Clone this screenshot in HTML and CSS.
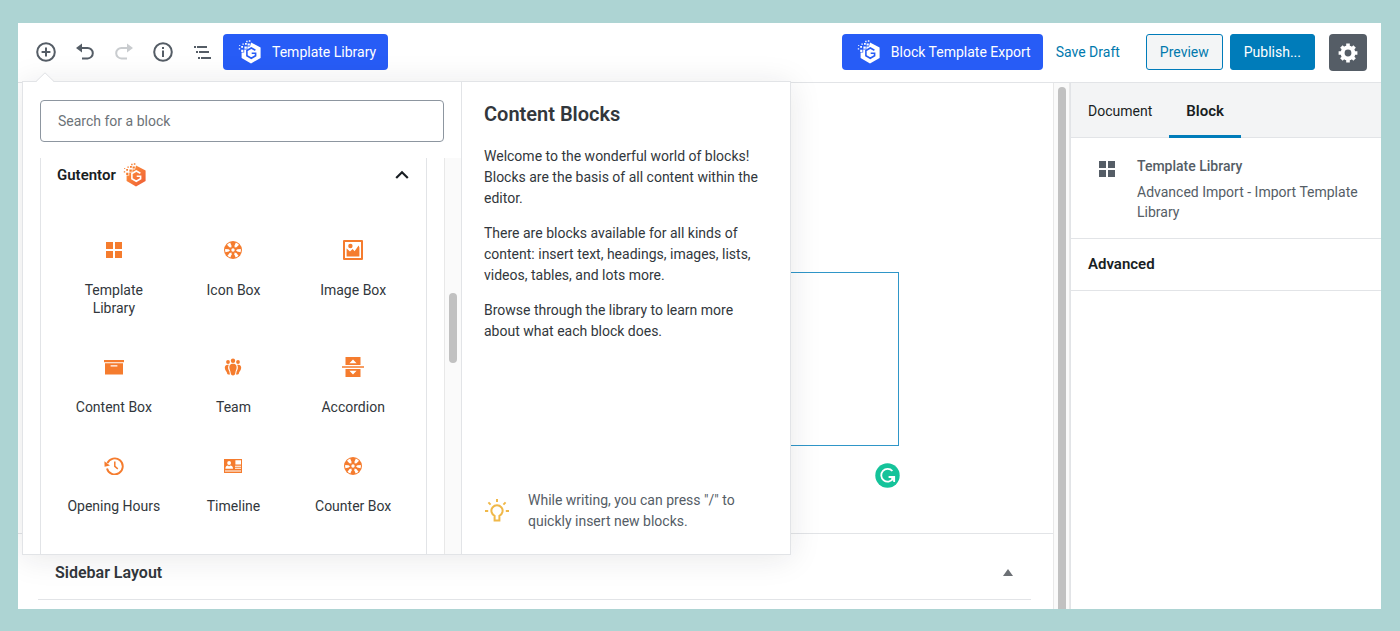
FILE: index.html
```html
<!DOCTYPE html>
<html lang="en">
<head>
<meta charset="utf-8">
<title>Block Editor</title>
<link rel="stylesheet" href="styles.css">
</head>
<body>
<svg class="defs" width="0" height="0" aria-hidden="true">
  <defs>
    <linearGradient id="flame" x1="0" y1="0" x2="1" y2="1">
      <stop offset="0" stop-color="#ff9a3c"/><stop offset="1" stop-color="#ee5a36"/>
    </linearGradient>
    <symbol id="logo" viewBox="0 0 24 24">
      <path class="hex" d="M13 2.4 22.6 7.6V18L13 23.4 3.6 18V12.6H6.2V9.6H9.4V6.4H12Z"/>
      <path class="bit" d="M9.6 3.4h2.2v2.2H9.6zM6.4 6.4h2.4v2.4H6.4zM3.2 9.8h2.2V12H3.2zM7 3h1.8v1.8H7zM3.2 6h1.8v1.8H3.2zM8.2.8h1.4v1.4H8.2zM10.8.2h1.6v1.6h-1.6zM4.4 3.4h1.4v1.4H4.4zM.8 8.2h1.4v1.4H.8zM1.2 5h1v1h-1z"/>
      <path class="cut" d="M17.4 10.3 13.3 8 8.9 10.5v5.3l4.4 2.5 4.3-2.5v-2.5h-3.9" fill="none" stroke-width="1.6"/>
    </symbol>
    <symbol id="grid" viewBox="0 0 16 16"><path d="M0 0h7v7H0zM9 0h7v7H9zM0 9h7v7H0zM9 9h7v7H9z"/></symbol>
    <symbol id="wheel" viewBox="0 0 18 18">
      <circle cx="9" cy="9" r="9"/>
      <g fill="#fff">
        <path d="M7.1 1.3Q9 .9 10.9 1.3L10.300 4.600 9 6 7.700 4.600Z" transform="rotate(35 9 9)"/>
        <path d="M7.3 1.3Q9 .9 10.7 1.3L10.200 4.600 9 6 7.800 4.600Z" transform="rotate(95 9 9)"/>
        <path d="M7.3 1.3Q9 .9 10.7 1.3L10.200 4.600 9 6 7.800 4.600Z" transform="rotate(148 9 9)"/>
        <path d="M7.3 1.3Q9 .9 10.7 1.3L10.200 4.600 9 6 7.800 4.600Z" transform="rotate(212 9 9)"/>
        <path d="M7.3 1.3Q9 .9 10.7 1.3L10.200 4.600 9 6 7.800 4.600Z" transform="rotate(265 9 9)"/>
        <path d="M7.1 1.3Q9 .9 10.9 1.3L10.300 4.600 9 6 7.700 4.600Z" transform="rotate(325 9 9)"/>
        <circle cx="9" cy="9" r="1.7"/>
      </g>
    </symbol>
  </defs>
</svg>

<div class="app">
  <header class="topbar">
    <div class="tools">
      <button class="tool" aria-label="Add block"><svg width="20" height="20" viewBox="0 0 20 20" fill="none" stroke="currentColor" stroke-width="2"><circle cx="10" cy="10" r="8.8"/><path d="M10 5.6v8.8M5.6 10h8.8"/></svg></button>
      <button class="tool" aria-label="Undo"><svg width="20" height="20" viewBox="0 0 20 20"><path d="M1 6 7 1.6v8.8z" fill="currentColor"/><path d="M5 6h7.6a5 5 0 0 1 0 10.4H7" fill="none" stroke="currentColor" stroke-width="2"/></svg></button>
      <button class="tool" aria-label="Redo" disabled><svg width="20" height="20" viewBox="0 0 20 20"><path d="M19 6 13 1.6v8.8z" fill="currentColor"/><path d="M15 6H7.4a5 5 0 0 0 0 10.4H13" fill="none" stroke="currentColor" stroke-width="2"/></svg></button>
      <button class="tool" aria-label="Content structure"><svg width="20" height="20" viewBox="0 0 20 20"><circle cx="10" cy="10" r="8.8" fill="none" stroke="currentColor" stroke-width="2"/><path d="M9 5h2v2H9zM9 8.6h2V15H9z" fill="currentColor"/></svg></button>
      <button class="tool" aria-label="Block navigation"><svg width="18" height="16" viewBox="0 0 18 16" fill="currentColor"><path d="M1 2h2v2H1zM4 2h10v2H4zM3 7h2v2H3zM6 7h10v2H6zM5 13h2v2H5zM8 13h10v2H8z"/></svg></button>
    </div>
    <button class="brand-btn"><svg class="logo logo-white" width="24" height="24"><use href="#logo"/></svg>Template Library</button>
    <div class="actions">
      <button class="brand-btn"><svg class="logo logo-white" width="24" height="24"><use href="#logo"/></svg>Block Template Export</button>
      <button class="save">Save Draft</button>
      <button class="btn preview">Preview</button>
      <button class="btn publish">Publish...</button>
      <button class="gear" aria-label="Settings"><svg width="20" height="20" viewBox="0 0 20 20" fill="none" stroke="#fff"><circle cx="10" cy="10" r="5.4" stroke-width="4"/><path stroke-width="3.6" d="M10 .6v3M10 16.4v3M.6 10h3M16.4 10h3M3.4 3.4l2 2M14.6 14.6l2 2M3.4 16.6l2-2M14.6 5.4l2-2"/></svg></button>
    </div>
  </header>

  <div class="workspace">
    <main class="editor">
      <section class="canvas">
        <div class="selected-block">
          <svg class="grammar" width="25" height="25" viewBox="0 0 25 25"><circle cx="12.5" cy="12.5" r="12.2" fill="#15c39a"/><path d="M17.4 8A6.4 6.4 0 1 0 18 15.8" fill="none" stroke="#fff" stroke-width="1.8"/><path d="M13.6 14h5.6v5" fill="none" stroke="#fff" stroke-width="1.8"/><path d="M18.8 14.6v4l-3.4-4z" fill="#fff"/></svg>
        </div>
      </section>
      <section class="meta">
        <div class="metabox">
          <h2>Sidebar Layout</h2>
          <button class="toggle" aria-label="Toggle panel"><svg width="10" height="8" viewBox="0 0 10 8"><path d="M5 0 10 7H0z" fill="#6c7075"/></svg></button>
        </div>
      </section>
    </main>
    <div class="scrollbar page-scroll"><span class="thumb"></span></div>
    <aside class="sidebar">
      <nav class="tabs">
        <button class="tab">Document</button>
        <button class="tab active">Block</button>
      </nav>
      <section class="card">
        <svg class="card-icon" width="16" height="16"><use href="#grid"/></svg>
        <div>
          <h2>Template Library</h2>
          <p>Advanced Import - Import Template Library</p>
        </div>
      </section>
      <button class="advanced">Advanced</button>
    </aside>
  </div>

  <div class="inserter">
    <svg class="notch" width="18" height="10" viewBox="0 0 18 10"><path d="M0 10 9 1l9 9z" fill="#fff"/><path d="M0 9.5 9 .8l9 8.7" fill="none" stroke="#dfe1e4"/></svg>
    <div class="picker">
      <div class="search"><input type="search" aria-label="Search for a block" placeholder="Search for a block"></div>
      <div class="results">
        <div class="panel">
          <button class="panel-head">Gutentor<svg class="logo logo-orange" width="24" height="24"><use href="#logo"/></svg><svg class="chevron" width="14" height="10" viewBox="0 0 14 10"><path d="M1.2 8 7 2.2 12.8 8" fill="none" stroke="#191e23" stroke-width="2.2"/></svg></button>
          <div class="blocks">
            <button class="block"><span class="ico"><svg width="16" height="16"><use href="#grid"/></svg></span>Template Library</button>
            <button class="block"><span class="ico"><svg width="18" height="18"><use href="#wheel"/></svg></span>Icon Box</button>
            <button class="block"><span class="ico"><svg width="20" height="20" viewBox="0 0 20 20"><path fill-rule="evenodd" d="M1 0h18a1 1 0 0 1 1 1v18a1 1 0 0 1-1 1H1a1 1 0 0 1-1-1V1a1 1 0 0 1 1-1zM2 2v16h16V2z"/><circle cx="7.4" cy="6" r="2.2"/><path d="M3.6 8.6 7 11.4 9.6 9l2 2.2 4-5.8.8 2V16.4H3.6z"/></svg></span>Image Box</button>
            <button class="block"><span class="ico"><svg width="20" height="16" viewBox="0 0 20 16"><path fill-rule="evenodd" d="M0 1h20v2.2H0zM1 4.2h18V15.5H1zM6.6 6.2v1.4h6.8V6.2z"/></svg></span>Content Box</button>
            <button class="block"><span class="ico"><svg width="18" height="18" viewBox="0 0 18 18"><circle cx="9" cy="2.8" r="2.2"/><circle cx="4" cy="4" r="1.9"/><circle cx="14" cy="4" r="1.9"/><path d="M9 5.8c3 0 3.8 1.8 3.6 4.2-.2 2-1 2.6-1.2 4.600-.2 2-1 2.8-2.4 2.8s-2.2-.8-2.400-2.8c-.2-2-1-2.6-1.200-4.600C5.2 7.6 6 5.8 9 5.8zM4.8 6.8C3.6 9 4 11.4 5.4 13.4c.2 1.6.4 2.2.8 3C4 17 3 16.4 2.8 14.2 2 12.8.8 12 .8 9.6c0-2.2 1.6-3.2 4-2.8zM13.2 6.8c1.2 2.2.8 4.6-.6 6.6-.2 1.6-.4 2.2-.8 3 2.2.6 3.2 0 3.4-2.2.8-1.4 2-2.2 2-4.6 0-2.2-1.6-3.2-4-2.8z"/></svg></span>Team</button>
            <button class="block"><span class="ico"><svg width="22" height="20" viewBox="0 0 22 20"><path fill-rule="evenodd" d="M3.5 0h15v8h-15zM7.4 6.2h7.2L11 2.4zM0 9.2h22v1.6H0zM3.5 12h15v8h-15zM7.4 13.8h7.2L11 17.6z"/></svg></span>Accordion</button>
            <button class="block"><span class="ico"><svg width="20" height="18" viewBox="0 0 20 18"><path d="M3.4 6.2a8 8 0 1 1-.4 5.2" fill="none" stroke="currentColor" stroke-width="1.9"/><path d="M.4 4.2 6 8.6.6 9.8z"/><path d="M10.8 4.6v4.8l3 2.4" fill="none" stroke="currentColor" stroke-width="1.5"/></svg></span>Opening Hours</button>
            <button class="block"><span class="ico"><svg width="18" height="14" viewBox="0 0 18 14"><path d="M0 0h18v14H0z"/><path fill="#fff" d="M11.4 1.2h5.6v4.4h-5.6zM11 6.8h6v.9h-6zM11 8.8h6v.9h-6zM1 11.4h16v1.2H1zM1.4 9.8c0-2.4 1.2-3 2.6-3.2L5 7.6l1.2-1c1.6.2 2.8.8 2.8 3.2z"/><circle cx="5.1" cy="4" r="1.9" fill="#fff"/></svg></span>Timeline</button>
            <button class="block"><span class="ico"><svg width="18" height="18"><use href="#wheel"/></svg></span>Counter Box</button>
          </div>
        </div>
        <div class="scrollbar list-scroll"><span class="thumb"></span></div>
      </div>
    </div>
    <div class="help">
      <h2>Content Blocks</h2>
      <p>Welcome to the wonderful world of blocks! Blocks are the basis of all content within the editor.</p>
      <p>There are blocks available for all kinds of content: insert text, headings, images, lists, videos, tables, and lots more.</p>
      <p>Browse through the library to learn more about what each block does.</p>
      <div class="tip">
        <svg width="26" height="26" viewBox="0 0 26 26" fill="none" stroke="#f0b849" stroke-width="2"><path d="M10.6 22.6v-4.8a5.6 5.6 0 1 1 4.8 0v4.8z"/><path d="M13 1v3M1 13h3.2M21.8 13H25M4.4 4.4l2.2 2.2M21.6 4.4l-2.2 2.2"/></svg>
        <p>While writing, you can press "/" to quickly insert new blocks.</p>
      </div>
    </div>
  </div>
</div>
</body>
</html>
```
FILE: styles.css
```css
* { box-sizing: border-box; }
body {
  margin: 0;
  min-height: 100vh;
  padding: 23px 19px 22px 18px;
  display: flex;
  background: #add4d3;
  color: #32373c;
  font: 14px/21px Roboto, "Liberation Sans", sans-serif;
}
h2, p { margin: 0; }
button { margin: 0; padding: 0; border: 0; background: none; font: inherit; color: inherit; cursor: pointer; }
svg { display: block; fill: currentColor; flex: none; }
svg[fill="none"] { fill: none; }
.defs { position: absolute; }

.app { position: relative; flex: 1; display: flex; flex-direction: column; background: #fff; overflow: hidden; }

.topbar { height: 60px; padding: 11px 14px 0 8px; display: flex; align-items: flex-start; border-bottom: 1px solid #e2e4e7; background: #fff; }
.tools { display: flex; }
.tool { width: 39px; height: 36px; display: grid; place-items: center; color: #555d66; }
.tool:disabled { color: #c9cccf; }
.brand-btn { height: 36px; padding: 0 12px 0 15px; display: flex; align-items: center; gap: 10px; border-radius: 4px; background: #275cf6; color: #fff; white-space: nowrap; }
.logo-white { --hex: #fff; --cut: #275cf6; }
.logo-orange { --hex: url(#flame); --bit: #f57c2e; --cut: #fff; }
.hex { fill: var(--hex); }
.bit { fill: var(--bit, #fff); }
.cut { stroke: var(--cut); }
.actions { margin-left: auto; display: flex; align-items: flex-start; }
.save { height: 36px; margin: 0 26px 0 13px; color: #0079ad; }
.btn { height: 36px; padding: 0 13px; border: 1px solid #007cba; border-radius: 3px; }
.preview { background: #f3f5f6; color: #0079ad; }
.publish { margin: 0 14px 0 7px; background: #007cba; color: #fff; }
.gear { width: 38px; height: 37px; display: grid; place-items: center; border-radius: 4px; background: #555d66; }
.tools + .brand-btn { margin-left: 2px; }

.workspace { flex: 1; display: flex; }
.editor { flex: 1; display: flex; flex-direction: column; }
.canvas { flex: 1; padding-top: 189px; border-bottom: 1px solid #e2e4e7; }
.selected-block { position: relative; max-width: 726px; height: 174px; margin: 0 auto; border: 1px solid #2f96c8; }
.grammar { position: absolute; right: -2px; bottom: -43px; }
.meta { padding: 0 22px 9px 20px; }
.metabox { height: 66px; padding: 12px 18px 0 17px; display: flex; justify-content: space-between; align-items: center; border-bottom: 1px solid #e2e4e7; }
.metabox h2 { font-size: 16px; font-weight: 600; }

.scrollbar { display: flex; flex-direction: column; align-items: center; background: #fafafa; border: solid #e8e8e8; border-width: 0 1px; }
.thumb { width: 8px; border-radius: 4px; background: #c1c1c1; }
.page-scroll { width: 17px; padding-top: 4px; }
.page-scroll .thumb { flex: 1; border-radius: 4px 4px 0 0; }

.sidebar { width: 311px; border-left: 1px solid #e2e4e7; }
.tabs { height: 55px; display: flex; background: #f3f4f5; border-bottom: 1px solid #e2e4e7; color: #191e23; }
.tab { height: 55px; padding: 4px 17px 0; border-bottom: 3px solid transparent; }
.tab.active { border-color: #007cba; font-size: 15px; font-weight: 600; }
.card { padding: 18px 17px 16px 28px; display: flex; gap: 22px; color: #555d66; border-bottom: 1px solid #e2e4e7; }
.card-icon { margin-top: 5px; }
.card h2 { margin-bottom: 5px; font-size: 14px; font-weight: 500; }
.card p { line-height: 20px; }
.advanced { display: block; width: 100%; height: 52px; padding: 0 17px; border-bottom: 1px solid #e2e4e7; text-align: left; font-size: 15px; font-weight: 600; color: #191e23; }

.inserter { position: absolute; left: 4px; top: 58px; width: 769px; height: 474px; display: flex; border: 1px solid #e2e4e7; background: #fff; box-shadow: 0 3px 30px rgba(25, 30, 35, .1); }
.notch { position: absolute; left: 13px; top: -10px; }
.picker { width: 439px; display: flex; flex-direction: column; border-right: 1px solid #e2e4e7; }
.search { padding: 18px 17px 16px; }
.search input { display: block; width: 100%; height: 42px; padding: 0 17px; border: 1px solid #8d96a0; border-radius: 4px; background: #fff; font: inherit; }
.search input::placeholder { color: #6c7378; opacity: 1; }
.results { flex: 1; min-height: 0; padding-left: 17px; display: flex; justify-content: space-between; overflow: hidden; }
.panel { width: 387px; border: solid #e2e4e7; border-width: 0 1px; overflow: hidden; }
.panel-head { width: 100%; height: 34px; padding: 0 17px 0 16px; display: flex; align-items: center; gap: 7px; font-size: 15px; font-weight: 600; color: #191e23; }
.chevron { margin-left: auto; }
.blocks { margin-top: 28px; padding: 0 13px; display: grid; grid-template-columns: repeat(3, 1fr); }
.block { padding: 18px 16px 20px; display: flex; flex-direction: column; align-items: center; gap: 19px; line-height: 18px; color: #32373c; }
.block:not(:first-child) { padding-left: 0; padding-right: 0; }
.ico { height: 24px; display: grid; place-items: center; color: #f57c2e; }
.list-scroll { width: 17px; padding-top: 135px; border-right: 0; }
.list-scroll .thumb { height: 70px; }

.help { flex: 1; padding: 20px 22px 22px; display: flex; flex-direction: column; gap: 14px; }
.help h2 { margin-bottom: 6px; font-size: 20px; line-height: 24px; font-weight: 600; }
.tip { margin-top: auto; display: flex; align-items: center; gap: 18px; color: #555d66; }
```
